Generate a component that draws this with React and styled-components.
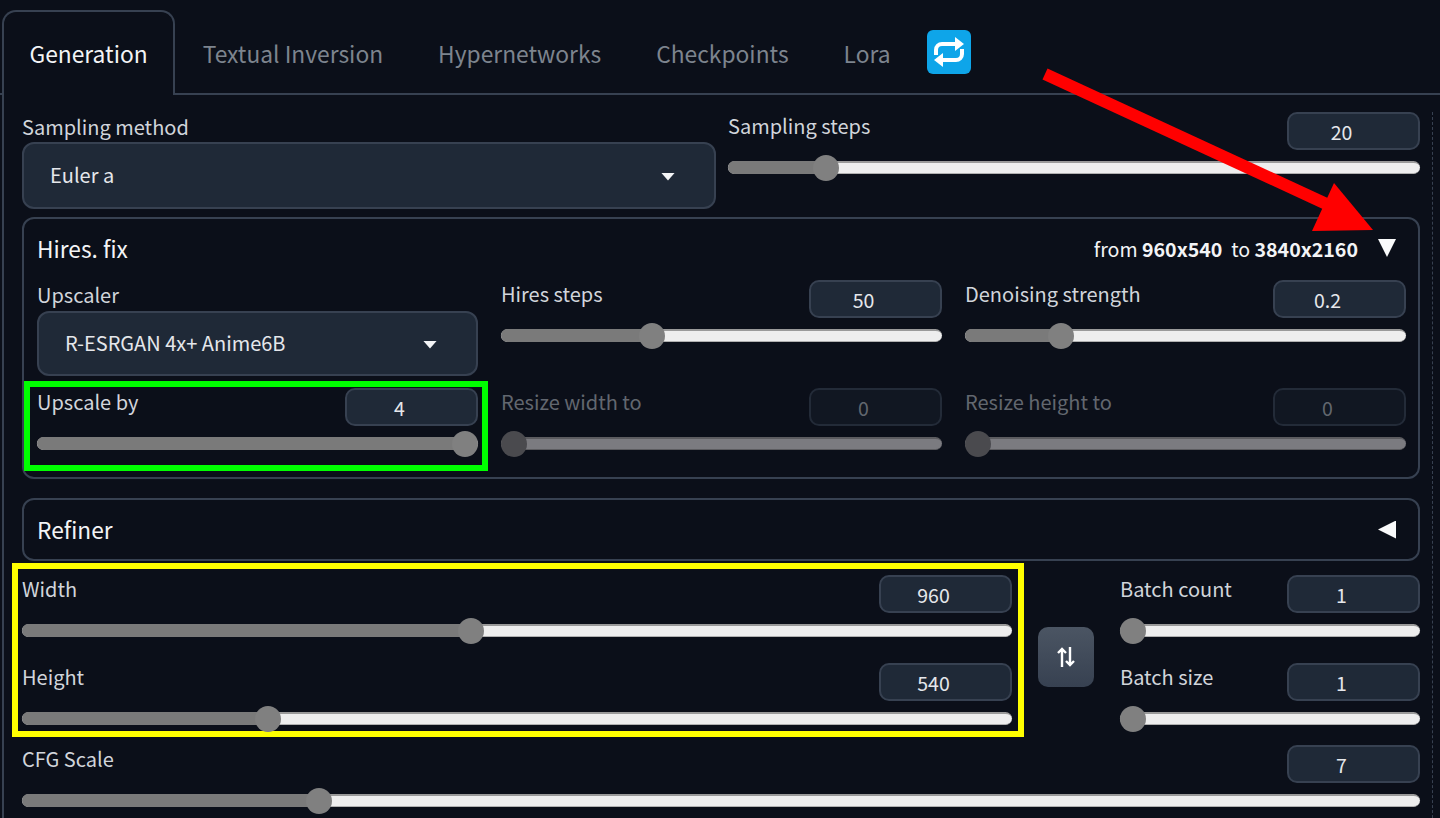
import React from "react";
import styled, { createGlobalStyle } from "styled-components";

const GlobalStyle = createGlobalStyle`
  html, body {
    margin: 0;
    padding: 0;
    background: #0b0f19;
    overflow: hidden;
  }
  body {
    font-family: "Noto Sans CJK SC", "Source Sans Pro", "Noto Sans", sans-serif;
  }
`;

const Page = styled.div`
  position: relative;
  width: 1440px;
  height: 818px;
  overflow: hidden;
  background: #0b0f19;
  color: #e5e7eb;
`;

const TabBar = styled.div`
  display: flex;
  align-items: flex-start;
  height: 95px;
  padding: 10px 0 0 2px;
  box-sizing: border-box;
  border-bottom: 2px solid #374151;
`;

const Tab = styled.div`
  height: 85px;
  box-sizing: border-box;
  padding: 0 25.5px;
  font-size: 22.8px;
  line-height: 83px;
  color: ${(p) => (p.$active ? "#f3f4f6" : "#7d848e")};
  background: ${(p) => (p.$active ? "#0b0f19" : "transparent")};
  border: 2px solid ${(p) => (p.$active ? "#374151" : "transparent")};
  border-bottom: none;
  border-radius: 14px 14px 0 0;
`;

const RefreshButton = styled.div`
  width: 44px;
  height: 44px;
  margin: 20px 0 0 9px;
  border-radius: 6px;
  background: #0ea5e9;
  display: flex;
  align-items: center;
  justify-content: center;
`;

const Panel = styled.div`
  display: flex;
  margin-left: 2px;
  border-left: 2px solid #374151;
`;

const Content = styled.div`
  width: 1398px;
  margin-left: 18px;
  padding: 17px 0 20px;
  display: flex;
  flex-direction: column;
`;

const ResizeLine = styled.div`
  margin: 17px 0 0 12px;
  border-left: 1.5px dashed #374151;
`;

const TopRow = styled.div`
  display: grid;
  grid-template-columns: 694px 692px;
  gap: 12px;
  height: 105px;
`;

const Field = styled.div`
  display: flex;
  flex-direction: column;
  padding-top: 1px;
`;

const Label = styled.div`
  font-size: 20px;
  line-height: 28px;
  color: ${(p) => (p.$off ? "#62676f" : "#d1d5db")};
`;

const Select = styled.div`
  height: ${(p) => p.$height}px;
  margin-top: ${(p) => p.$gap}px;
  box-sizing: border-box;
  padding: 0 39px 2px 26px;
  display: flex;
  align-items: center;
  justify-content: space-between;
  background: #1f2937;
  border: 2px solid #374151;
  border-radius: 12px;
  font-size: 20px;
  color: #e5e7eb;
`;

const Caret = styled.span`
  width: 14px;
  height: 8px;
  margin-top: 4px;
  background: #f3f4f6;
  clip-path: polygon(0 0, 100% 0, 50% 100%);
`;

const SliderBlock = styled.div`
  position: relative;
  height: 68px;
`;

const SliderHead = styled.div`
  display: flex;
  justify-content: space-between;
  height: 38px;
`;

const NumberBox = styled.div`
  width: 133px;
  height: 38px;
  box-sizing: border-box;
  padding-right: 24px;
  text-align: center;
  font-size: 19.5px;
  line-height: 35px;
  color: ${(p) => (p.$off ? "#62676f" : "#e5e7eb")};
  background: ${(p) => (p.$off ? "#111722" : "#1f2937")};
  border: 2px solid ${(p) => (p.$off ? "#232b38" : "#374151")};
  border-radius: 10px;
`;

const Track = styled.div`
  position: relative;
  height: 13px;
  margin-top: 11px;
  border-radius: 7px;
  box-sizing: border-box;
  background: ${(p) => (p.$off ? "#7b7b80" : "#eeeeee")};
  border-top: 2px solid ${(p) => (p.$off ? "#5c5c60" : "#9a9a9a")};
  border-bottom: 1px solid ${(p) => (p.$off ? "#5c5c60" : "#b0b0b0")};
`;

const TrackFill = styled.div`
  position: absolute;
  left: 0;
  top: -2px;
  bottom: -1px;
  border-radius: 7px 0 0 7px;
  background: ${(p) => (p.$off ? "#7b7b80" : "#7a7a7a")};
`;

const Thumb = styled.div`
  position: absolute;
  top: -8px;
  width: 26px;
  height: 26px;
  border-radius: 50%;
  background: ${(p) => (p.$off ? "#4a4a4e" : "#808080")};
`;

const Accordion = styled.div`
  margin-top: ${(p) => p.$gap || 0}px;
  border: 2px solid #374151;
  border-radius: 12px;
  box-sizing: border-box;
  padding: 0 13px;
  display: flex;
  flex-direction: column;
`;

const AccordionHead = styled.div`
  display: flex;
  align-items: center;
  justify-content: space-between;
  height: ${(p) => p.$height}px;
  box-sizing: border-box;
  padding-bottom: ${(p) => p.$lift || 0}px;
  font-size: 22.7px;
  color: #f3f4f6;
`;

const HeadRight = styled.div`
  display: flex;
  align-items: center;
  gap: 20px;
  padding-right: 9px;
  font-size: 19.6px;
  white-space: pre;
  b {
    font-weight: 600;
  }
`;

const Triangle = styled.span`
  flex-shrink: 0;
  width: 18px;
  height: 18px;
  background: #f9fafb;
  clip-path: ${(p) =>
    p.$open
      ? "polygon(0 0, 100% 0, 50% 100%)"
      : "polygon(100% 0, 100% 100%, 0 50%)"};
`;

const HiresGrid = styled.div`
  display: grid;
  grid-template-columns: repeat(3, 441px);
  grid-template-rows: 96px 68px;
  column-gap: 23px;
  row-gap: 12px;
  padding-bottom: 21px;
`;

const Dimensions = styled.div`
  display: flex;
  margin-top: 14px;
`;

const DimColumn = styled.div`
  position: relative;
  width: 990px;
  display: flex;
  flex-direction: column;
  gap: 20px;
`;

const SwapColumn = styled.div`
  width: 56px;
  margin: 0 26px;
  padding-top: 52px;
`;

const SwapButton = styled.div`
  width: 56px;
  height: 60px;
  display: flex;
  align-items: center;
  justify-content: center;
  border-radius: 10px;
  background: linear-gradient(to bottom, #4b5563, #374151);
`;

const BatchColumn = styled.div`
  width: 300px;
  display: flex;
  flex-direction: column;
  gap: 20px;
`;

const CfgRow = styled.div`
  margin-top: 14px;
`;

const Highlight = styled.div`
  position: absolute;
  top: ${(p) => p.$top}px;
  right: ${(p) => p.$right}px;
  bottom: ${(p) => p.$bottom}px;
  left: ${(p) => p.$left}px;
  border: 6px solid ${(p) => p.$color};
  pointer-events: none;
`;

const ArrowOverlay = styled.svg`
  position: absolute;
  left: 1030px;
  top: 60px;
`;

function Slider({ label, value, pct, off, children }) {
  return (
    <SliderBlock>
      {children}
      <SliderHead>
        <Label $off={off}>{label}</Label>
        <NumberBox $off={off}>{value}</NumberBox>
      </SliderHead>
      <Track $off={off}>
        <TrackFill $off={off} style={{ width: `calc(${pct} * (100% - 26px) + 13px)` }} />
        <Thumb $off={off} style={{ left: `calc(${pct} * (100% - 26px))` }} />
      </Track>
    </SliderBlock>
  );
}

function RepeatIcon() {
  return (
    <svg width="36" height="36" viewBox="0 0 36 36" fill="none">
      <path d="M5 21v-5a6 6 0 0 1 6-6h15" stroke="#fff" strokeWidth="4" />
      <path d="M24 3l9 7-9 7z" fill="#fff" />
      <path d="M31 15v5a6 6 0 0 1-6 6H11" stroke="#fff" strokeWidth="4" />
      <path d="M12 19l-9 7 9 7z" fill="#fff" />
    </svg>
  );
}

function SwapIcon() {
  return (
    <svg width="18" height="20" viewBox="0 0 18 20" fill="none" stroke="#fff" strokeWidth="2.4">
      <path d="M5 20V2M1 6l4-4 4 4" />
      <path d="M13 0v18M9 14l4 4 4-4" />
    </svg>
  );
}

export default function App() {
  return (
    <Page>
      <GlobalStyle />
      <TabBar>
        <Tab $active>Generation</Tab>
        <Tab>Textual Inversion</Tab>
        <Tab>Hypernetworks</Tab>
        <Tab>Checkpoints</Tab>
        <Tab>Lora</Tab>
        <RefreshButton>
          <RepeatIcon />
        </RefreshButton>
      </TabBar>
      <Panel>
        <Content>
          <TopRow>
            <Field>
              <Label>Sampling method</Label>
              <Select $height={67} $gap={1}>
                Euler a
                <Caret />
              </Select>
            </Field>
            <Slider label="Sampling steps" value="20" pct={0.1275} />
          </TopRow>

          <Accordion>
            <AccordionHead $height={61} $lift={3}>
              Hires. fix
              <HeadRight>
                <span>
                  from <b>960x540</b>  to <b>3840x2160</b>
                </span>
                <Triangle $open />
              </HeadRight>
            </AccordionHead>
            <HiresGrid>
              <Field>
                <Label>Upscaler</Label>
                <Select $height={65} $gap={2}>
                  R-ESRGAN 4x+ Anime6B
                  <Caret />
                </Select>
              </Field>
              <Slider label="Hires steps" value="50" pct={0.3325} />
              <Slider label="Denoising strength" value="0.2" pct={0.2} />
              <Slider label="Upscale by" value="4" pct={1}>
                <Highlight $color="#00ff00" $top={-7} $right={-10} $bottom={-15} $left={-13} />
              </Slider>
              <Slider label="Resize width to" value="0" pct={0} off />
              <Slider label="Resize height to" value="0" pct={0} off />
            </HiresGrid>
          </Accordion>

          <Accordion $gap={19}>
            <AccordionHead $height={59}>
              Refiner
              <HeadRight>
                <Triangle />
              </HeadRight>
            </AccordionHead>
          </Accordion>

          <Dimensions>
            <DimColumn>
              <Highlight $color="#ffff00" $top={-12} $right={-12} $bottom={-6} $left={-10} />
              <Slider label="Width" value="960" pct={0.452} />
              <Slider label="Height" value="540" pct={0.2417} />
            </DimColumn>
            <SwapColumn>
              <SwapButton>
                <SwapIcon />
              </SwapButton>
            </SwapColumn>
            <BatchColumn>
              <Slider label="Batch count" value="1" pct={0} />
              <Slider label="Batch size" value="1" pct={0} />
            </BatchColumn>
          </Dimensions>

          <CfgRow>
            <Slider label="CFG Scale" value="7" pct={0.207} />
          </CfgRow>
        </Content>
        <ResizeLine />
      </Panel>
      <ArrowOverlay width="360" height="180" viewBox="0 0 360 180">
        <path d="M15 14L305 148" stroke="#ff0000" strokeWidth="12" fill="none" />
        <path d="M304 123L343 170L282 171Z" fill="#ff0000" />
      </ArrowOverlay>
    </Page>
  );
}
